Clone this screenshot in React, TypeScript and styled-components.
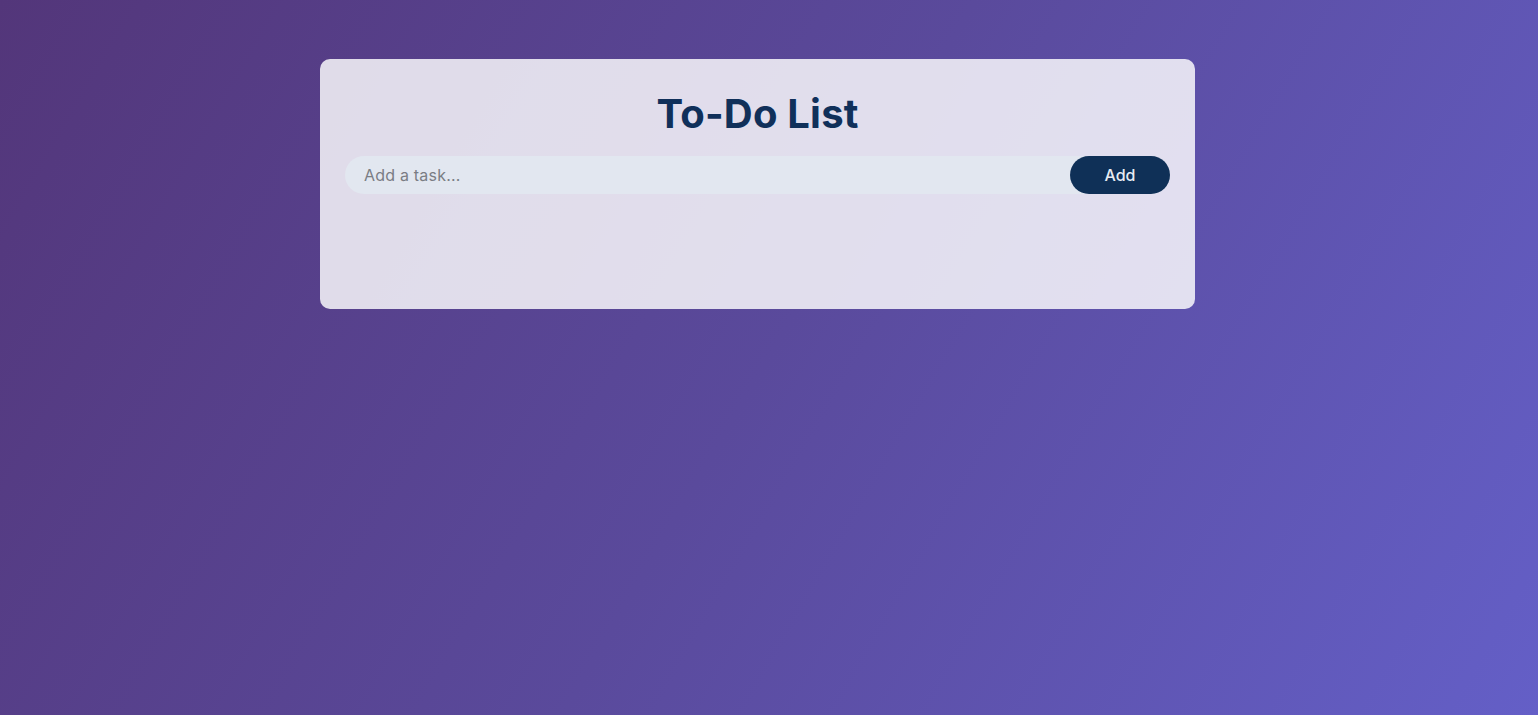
import React, { useState } from 'react';
import styled, { createGlobalStyle } from 'styled-components';

const GlobalStyle = createGlobalStyle`
  html, body {
    margin: 0;
    padding: 0;
    min-height: 100%;
  }
  body {
    min-height: 715px;
    font-family: Inter, "Noto Sans", sans-serif;
    background: linear-gradient(120deg, #53367a 0%, #5a4a9c 50%, #645fc7 100%);
  }
`;

const Page = styled.div`
  min-height: 715px;
  padding-top: 59px;
  padding-left: 320px;
  box-sizing: border-box;
`;

const Card = styled.div`
  width: 875px;
  height: 250px;
  box-sizing: border-box;
  padding: 25px 25px;
  border-radius: 10px;
  background: rgba(255, 255, 255, 0.82);
`;

const Title = styled.h1`
  margin: 6px 0 18px;
  text-align: center;
  font-size: 40px;
  line-height: 48px;
  font-weight: 700;
  letter-spacing: 0.2px;
  color: #10305a;
`;

const Row = styled.form`
  display: flex;
  height: 38px;
  border-radius: 19px;
  background: #e2e7f0;
`;

const Input = styled.input`
  flex: 1;
  border: none;
  background: transparent;
  outline: none;
  padding: 0 19px;
  font-family: inherit;
  font-size: 16px;
  letter-spacing: 0.2px;
  color: #333;

  &::placeholder {
    color: #7a7d84;
  }
`;

const AddButton = styled.button`
  width: 100px;
  border: none;
  border-radius: 19px;
  background: #0f3057;
  color: #e6ebf3;
  font-family: inherit;
  font-size: 16px;
  font-weight: 500;
  cursor: pointer;
`;

const List = styled.ul`
  list-style: none;
  margin: 12px 0 0;
  padding: 0;
`;

const App: React.FC = () => {
  const [task, setTask] = useState('');
  const [tasks, setTasks] = useState<string[]>([]);

  const handleSubmit = (e: React.FormEvent) => {
    e.preventDefault();
    if (task.trim()) {
      setTasks([...tasks, task.trim()]);
      setTask('');
    }
  };

  return (
    <>
      <GlobalStyle />
      <Page>
        <Card>
          <Title>To-Do List</Title>
          <Row onSubmit={handleSubmit}>
            <Input
              value={task}
              onChange={e => setTask(e.target.value)}
              placeholder="Add a task..."
            />
            <AddButton type="submit">Add</AddButton>
          </Row>
          <List>
            {tasks.map((t, i) => (
              <li key={i}>{t}</li>
            ))}
          </List>
        </Card>
      </Page>
    </>
  );
};

export default App;
